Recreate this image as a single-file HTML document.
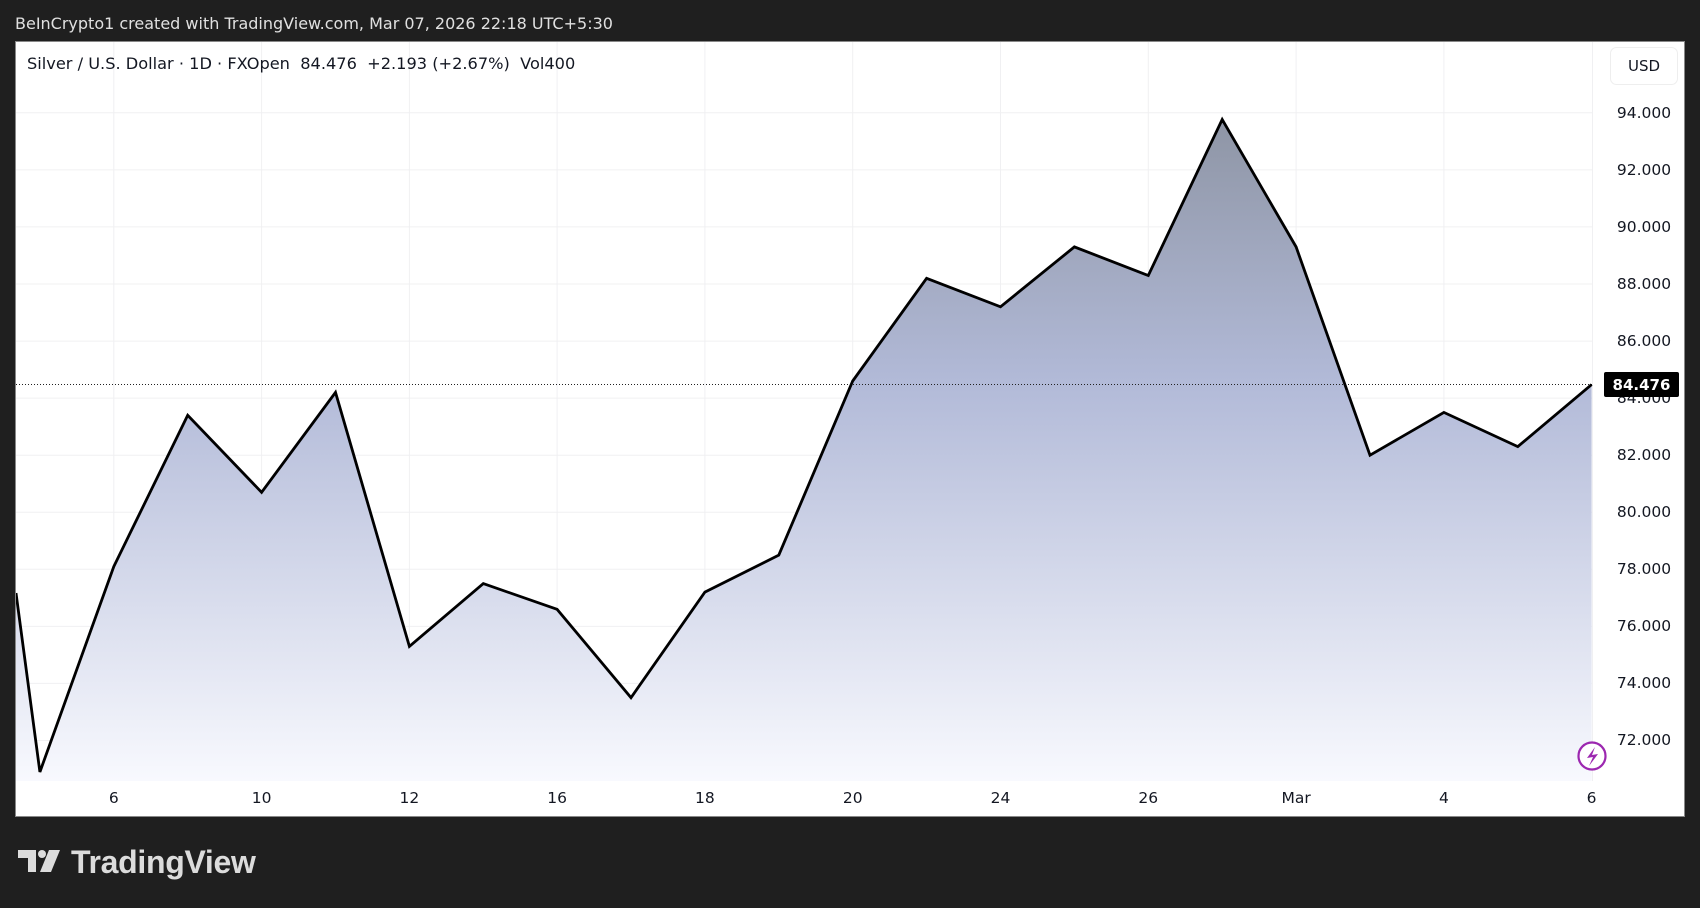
<!DOCTYPE html>
<html><head><meta charset="utf-8"><style>
body{margin:0;width:1700px;height:908px;background:#1f1f1f;overflow:hidden;font-family:"DejaVu Sans","Liberation Sans",sans-serif}
svg{position:absolute;left:0;top:0}
</style></head><body>
<svg width="1700" height="908" viewBox="0 0 1700 908">
<defs>
<linearGradient id="g" x1="0" y1="118" x2="0" y2="781" gradientUnits="userSpaceOnUse">
<stop offset="0" stop-color="#8e95a5"/><stop offset="0.4" stop-color="#b2bad8"/><stop offset="1" stop-color="#f8f9fe"/>
</linearGradient>
<clipPath id="c"><rect x="16" y="42" width="1577" height="739"/></clipPath>
</defs>
<text x="15" y="29" fill="#e0e0e0" font-size="16">BeInCrypto1 created with TradingView.com, Mar 07, 2026 22:18 UTC+5:30</text>
<rect x="15.5" y="41.5" width="1669" height="775" fill="#fff" stroke="#888"/>
<g stroke="#f0f0f2" stroke-width="1">
<line x1="16" x2="1593" y1="112.8" y2="112.8"/><line x1="16" x2="1593" y1="169.9" y2="169.9"/><line x1="16" x2="1593" y1="226.9" y2="226.9"/><line x1="16" x2="1593" y1="284" y2="284"/><line x1="16" x2="1593" y1="341.1" y2="341.1"/><line x1="16" x2="1593" y1="398.1" y2="398.1"/><line x1="16" x2="1593" y1="455.2" y2="455.2"/><line x1="16" x2="1593" y1="512.3" y2="512.3"/><line x1="16" x2="1593" y1="569.3" y2="569.3"/><line x1="16" x2="1593" y1="626.4" y2="626.4"/><line x1="16" x2="1593" y1="683.4" y2="683.4"/><line x1="16" x2="1593" y1="740.5" y2="740.5"/>
<line y1="42" y2="781" x1="113.8" x2="113.8"/><line y1="42" y2="781" x1="261.6" x2="261.6"/><line y1="42" y2="781" x1="409.4" x2="409.4"/><line y1="42" y2="781" x1="557.1" x2="557.1"/><line y1="42" y2="781" x1="704.9" x2="704.9"/><line y1="42" y2="781" x1="852.7" x2="852.7"/><line y1="42" y2="781" x1="1000.5" x2="1000.5"/><line y1="42" y2="781" x1="1148.3" x2="1148.3"/><line y1="42" y2="781" x1="1296.1" x2="1296.1"/><line y1="42" y2="781" x1="1443.9" x2="1443.9"/><line y1="42" y2="781" x1="1592.5" x2="1592.5"/>
</g>
<g clip-path="url(#c)">
<path fill="url(#g)" d="M16 593 L39.9 772 L113.8 566.5 L187.7 415.3 L261.6 492.3 L335.5 392.4 L409.4 646.4 L483.3 583.6 L557.1 609.3 L631 697.7 L704.9 592.1 L778.8 555.1 L852.7 381 L926.6 278.3 L1000.5 306.8 L1074.4 246.9 L1148.3 275.5 L1222.2 119.5 L1296.1 246.9 L1370 455.2 L1443.9 412.4 L1517.8 446.6 L1591.6 384.6 L1591.6 781 L16 781Z"/>
<line x1="16" x2="1593" y1="384.5" y2="384.5" stroke="#222" stroke-dasharray="1 2"/>
<path fill="none" stroke="#000" stroke-width="2.8" stroke-linejoin="miter" d="M16 593 L39.9 772 L113.8 566.5 L187.7 415.3 L261.6 492.3 L335.5 392.4 L409.4 646.4 L483.3 583.6 L557.1 609.3 L631 697.7 L704.9 592.1 L778.8 555.1 L852.7 381 L926.6 278.3 L1000.5 306.8 L1074.4 246.9 L1148.3 275.5 L1222.2 119.5 L1296.1 246.9 L1370 455.2 L1443.9 412.4 L1517.8 446.6 L1591.6 384.6"/>
</g>
<text x="27" y="69" fill="#131722" font-size="16.2" xml:space="preserve">Silver / U.S. Dollar · 1D · FXOpen  84.476  +2.193 (+2.67%)  Vol400</text>
<rect x="1610.5" y="47.5" width="67" height="37" rx="6" fill="#fff" stroke="#eee"/>
<text x="1644" y="71" text-anchor="middle" fill="#131722" font-size="15">USD</text>
<g fill="#131722" font-size="15.5" text-anchor="middle">
<text x="1644" y="118">94.000</text><text x="1644" y="175">92.000</text><text x="1644" y="232">90.000</text><text x="1644" y="289">88.000</text><text x="1644" y="346">86.000</text><text x="1644" y="403">84.000</text><text x="1644" y="460">82.000</text><text x="1644" y="517">80.000</text><text x="1644" y="574">78.000</text><text x="1644" y="631">76.000</text><text x="1644" y="688">74.000</text><text x="1644" y="745">72.000</text>
<text x="113.8" y="803">6</text><text x="261.6" y="803">10</text><text x="409.4" y="803">12</text><text x="557.1" y="803">16</text><text x="704.9" y="803">18</text><text x="852.7" y="803">20</text><text x="1000.5" y="803">24</text><text x="1148.3" y="803">26</text><text x="1296.1" y="803">Mar</text><text x="1443.9" y="803">4</text><text x="1591.6" y="803">6</text>
</g>
<rect x="1604" y="372" width="75" height="25" rx="2" fill="#000"/>
<text x="1641.5" y="390" text-anchor="middle" fill="#fff" font-size="15" font-weight="bold">84.476</text>
<circle cx="1592" cy="756" r="13.5" fill="#fff" stroke="#9c27b0" stroke-width="2.2"/>
<path d="M1595 747 L1587 758 L1593 757 L1589 766 L1598 754 L1592 755 Z" fill="#9c27b0"/>
<g fill="#dcdcdc">
<path d="M18 850 H36 V872 H28 V858 H18 Z"/><circle cx="42" cy="854" r="4"/><path d="M49 850 H60 L51 872 H40 Z"/>
</g>
<text x="71" y="873" fill="#dcdcdc" font-family="Liberation Sans,sans-serif" font-size="32" font-weight="bold" letter-spacing="-0.3">TradingView</text>
</svg>
</body></html>
